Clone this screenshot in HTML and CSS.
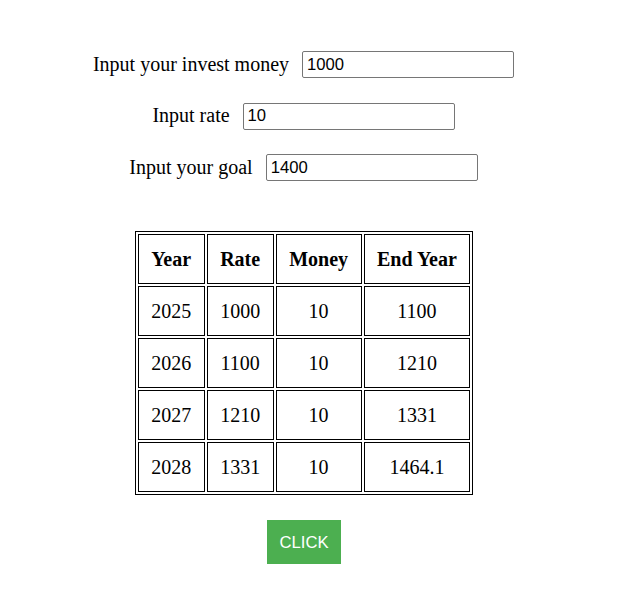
FILE: index.html
```html
<!DOCTYPE html>
<html>
<head>
<meta charset="utf-8">
<link rel="stylesheet" href="styles.css">
</head>
<body>
<div class="page">
  <div class="form">
    <div class="row"><label class="lbl">Input your invest money</label><input class="field" type="text" value="1000"></div>
    <div class="row"><label class="lbl">Input rate</label><input class="field" type="text" value="10"></div>
    <div class="row"><label class="lbl">Input your goal</label><input class="field" type="text" value="1400"></div>
  </div>
  <table class="grid">
    <tr><th>Year</th><th>Rate</th><th>Money</th><th>End Year</th></tr>
    <tr><td>2025</td><td>1000</td><td>10</td><td>1100</td></tr>
    <tr><td>2026</td><td>1100</td><td>10</td><td>1210</td></tr>
    <tr><td>2027</td><td>1210</td><td>10</td><td>1331</td></tr>
    <tr><td>2028</td><td>1331</td><td>10</td><td>1464.1</td></tr>
  </table>
  <div class="actions"><button class="btn">CLICK</button></div>
</div>
</body>
</html>
```
FILE: styles.css
```css
html, body {
  margin: 0;
  padding: 0;
  background: #fff;
}
body {
  font-family: "Liberation Serif", "Times New Roman", serif;
  font-size: 20px;
  color: #000;
}
.page {
  width: 608px;
  padding-top: 51px;
}
.form {
  display: flex;
  flex-direction: column;
  align-items: center;
  gap: 24.5px;
  padding-right: 1px;
}
.row {
  display: flex;
  align-items: center;
  gap: 13px;
  height: 27px;
}
.lbl {
  line-height: 23px;
  margin-top: -1px;
}
.field {
  box-sizing: border-box;
  width: 212px;
  height: 27px;
  margin: 0;
  padding: 1px 4px;
  border: 1px solid #767676;
  border-radius: 2px;
  font-family: "Liberation Sans", Arial, sans-serif;
  font-size: 16.67px;
  color: #000;
  background: #fff;
}
.grid {
  margin: 50px auto 0;
  border: 1px solid #000;
  border-collapse: separate;
  border-spacing: 2px;
}
.grid th, .grid td {
  border: 1px solid #000;
  padding: 12.5px 12.5px;
  line-height: 23px;
  text-align: center;
  font-size: 20px;
}
.grid th {
  font-weight: bold;
}
.actions {
  display: flex;
  justify-content: center;
  margin-top: 25px;
}
.btn {
  background: #4caf50;
  color: #fff;
  border: none;
  padding: 12.5px 12.5px;
  font-family: "Liberation Sans", Arial, sans-serif;
  font-size: 16.67px;
  line-height: 19px;
  cursor: pointer;
}
```
